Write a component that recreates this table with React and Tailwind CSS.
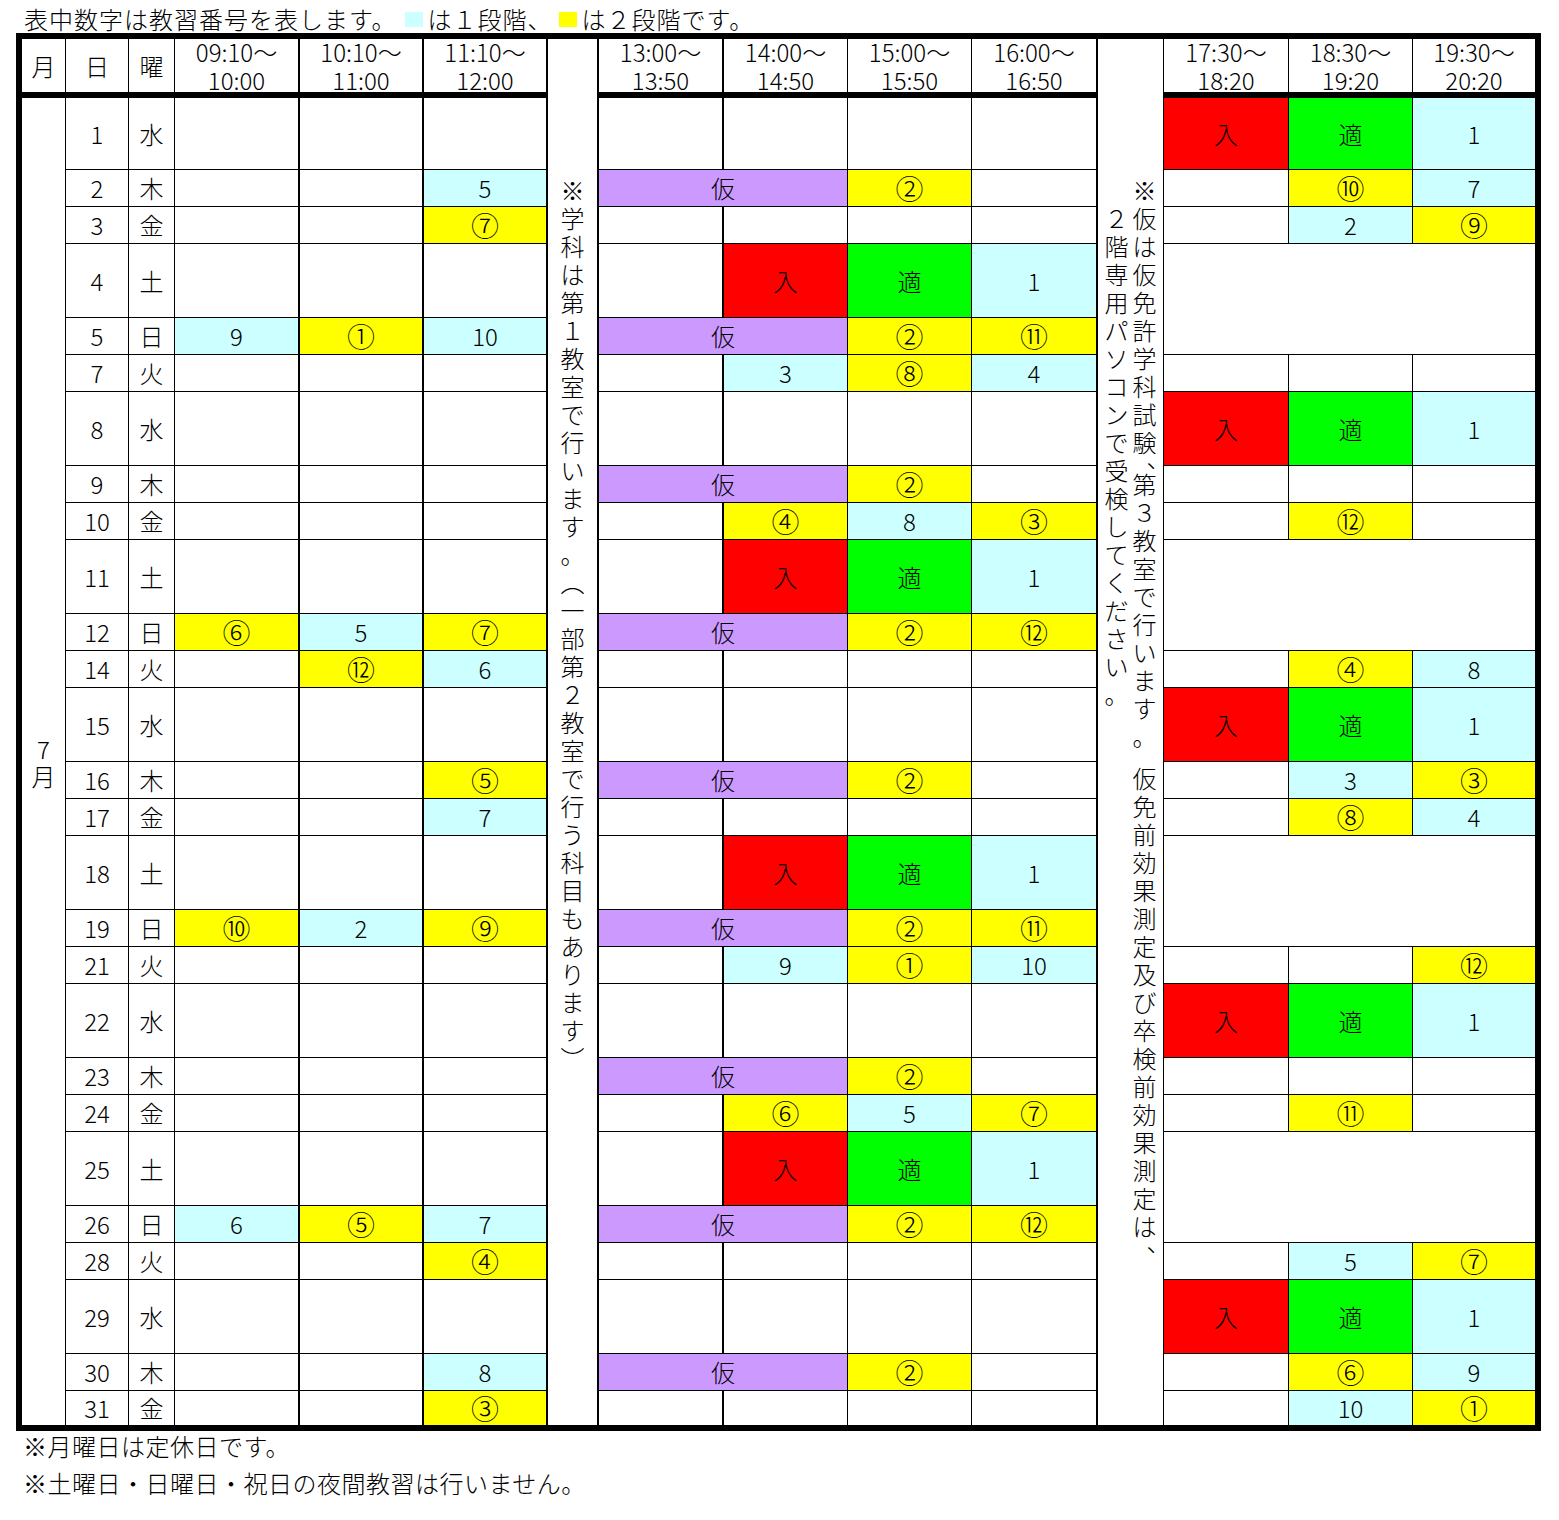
import React from "react";

const circled = "①②③④⑤⑥⑦⑧⑨⑩⑪⑫";

// 月の時間割（1行 = 1日）
const rows = [
  { d: "1", w: "水", tall: true, e: ["入", "適", "1"] },
  { d: "2", w: "木", m: ["", "", "5"], k: ["②", ""], e: ["", "⑩", "7"] },
  { d: "3", w: "金", m: ["", "", "⑦"], e: ["", "2", "⑨"] },
  { d: "4", w: "土", tall: true, a: ["", "入", "適", "1"], off: true },
  { d: "5", w: "日", m: ["9", "①", "10"], k: ["②", "⑪"], off: true },
  { d: "7", w: "火", a: ["", "3", "⑧", "4"] },
  { d: "8", w: "水", tall: true, e: ["入", "適", "1"] },
  { d: "9", w: "木", k: ["②", ""] },
  { d: "10", w: "金", a: ["", "④", "8", "③"], e: ["", "⑫", ""] },
  { d: "11", w: "土", tall: true, a: ["", "入", "適", "1"], off: true },
  { d: "12", w: "日", m: ["⑥", "5", "⑦"], k: ["②", "⑫"], off: true },
  { d: "14", w: "火", m: ["", "⑫", "6"], e: ["", "④", "8"] },
  { d: "15", w: "水", tall: true, e: ["入", "適", "1"] },
  { d: "16", w: "木", m: ["", "", "⑤"], k: ["②", ""], e: ["", "3", "③"] },
  { d: "17", w: "金", m: ["", "", "7"], e: ["", "⑧", "4"] },
  { d: "18", w: "土", tall: true, a: ["", "入", "適", "1"], off: true },
  { d: "19", w: "日", m: ["⑩", "2", "⑨"], k: ["②", "⑪"], off: true },
  { d: "21", w: "火", a: ["", "9", "①", "10"], e: ["", "", "⑫"] },
  { d: "22", w: "水", tall: true, e: ["入", "適", "1"] },
  { d: "23", w: "木", k: ["②", ""] },
  { d: "24", w: "金", a: ["", "⑥", "5", "⑦"], e: ["", "⑪", ""] },
  { d: "25", w: "土", tall: true, a: ["", "入", "適", "1"], off: true },
  { d: "26", w: "日", m: ["6", "⑤", "7"], k: ["②", "⑫"], off: true },
  { d: "28", w: "火", m: ["", "", "④"], e: ["", "5", "⑦"] },
  { d: "29", w: "水", tall: true, e: ["入", "適", "1"] },
  { d: "30", w: "木", m: ["", "", "8"], k: ["②", ""], e: ["", "⑥", "9"] },
  { d: "31", w: "金", m: ["", "", "③"], e: ["", "10", "①"] },
];

const offBlocks = [
  "col-[13/span_3] row-[6/span_2]",
  "col-[13/span_3] row-[12/span_2]",
  "col-[13/span_3] row-[18/span_2]",
  "col-[13/span_3] row-[24/span_2]",
];

const headers = [
  ["09:10～", "10:00"],
  ["10:10～", "11:00"],
  ["11:10～", "12:00"],
  ["13:00～", "13:50"],
  ["14:00～", "14:50"],
  ["15:00～", "15:50"],
  ["16:00～", "16:50"],
  ["17:30～", "18:20"],
  ["18:30～", "19:20"],
  ["19:30～", "20:20"],
];

function tone(v) {
  if (!v) return "bg-white";
  if (v === "入") return "bg-[#ff0000]";
  if (v === "適") return "bg-[#00ff00]";
  if (v === "仮") return "bg-[#cc99ff]";
  if (circled.includes(v)) return "bg-[#ffff00]";
  return "bg-[#ccffff]";
}

function Cell({ v, edge, wide, plain }) {
  const ring = v && circled.includes(v);
  return (
    <div
      className={`flex items-center justify-center leading-none ${ring ? "text-[28px]" : "text-[24px]"} ${
        plain ? "bg-white" : tone(v)
      } ${edge ? "border-l border-black" : ""} ${wide ? "col-span-2" : ""}`}
    >
      {v}
    </div>
  );
}

function Stack({ text, skip }) {
  return (
    <div className="flex w-[24px] flex-col items-center">
      {skip && <span className="h-[28px]" />}
      {Array.from(text).map((c, i) =>
        c === "|" ? (
          <span key={i} className="h-[14px]" />
        ) : c === "､" ? (
          <span key={i} className="relative block h-[14px] w-[24px]">
            <span className="absolute left-[14px] top-[-12px] text-[24px] leading-[28px]">、</span>
          </span>
        ) : (
          <span key={i} className="block h-[28px] text-center text-[24px] leading-[28px]">
            {c}
          </span>
        )
      )}
    </div>
  );
}

export default function App() {
  const cells = [];
  rows.forEach((r) => {
    const m = r.m || ["", "", ""];
    const e = r.e || ["", "", ""];
    cells.push(<Cell key={r.d + "d"} v={r.d} plain />);
    cells.push(<Cell key={r.d + "w"} v={r.w} plain />);
    m.forEach((v, i) => cells.push(<Cell key={r.d + "m" + i} v={v} edge={i > 0} />));
    if (r.k) {
      cells.push(<Cell key={r.d + "k"} v="仮" edge wide />);
      r.k.forEach((v, i) => cells.push(<Cell key={r.d + "kk" + i} v={v} />));
    } else {
      const a = r.a || ["", "", "", ""];
      a.forEach((v, i) => cells.push(<Cell key={r.d + "a" + i} v={v} edge={i < 2} />));
    }
    if (!r.off) e.forEach((v, i) => cells.push(<Cell key={r.d + "e" + i} v={v} />));
  });

  return (
    <div className="min-h-screen bg-white font-light text-black font-['Noto_Sans_CJK_JP','Noto_Sans_CJK_SC',sans-serif]">
      <div className="flex h-[33px] items-center pl-[24px] pt-[5px] text-[24px] tracking-[1px]">
        <span>表中数字は教習番号を表します。</span>
        <span className="ml-[8px] mr-[5px] inline-block h-[15px] w-[18px] bg-[#ccffff]" />
        <span>は１段階、</span>
        <span className="ml-[6px] mr-[5px] inline-block h-[15px] w-[18px] bg-[#ffff00]" />
        <span>は２段階です。</span>
      </div>

      <div className="ml-[16px] grid w-fit gap-px border-[6px] border-black bg-black grid-cols-[43px_62px_45px_123px_123px_123px_50px_124px_124px_123px_124px_66px_124px_123px_122px] grid-rows-[53px_4px_71px_36px_36px_73px_36px_36px_73px_36px_36px_73px_36px_36px_73px_36px_36px_73px_36px_36px_73px_36px_36px_73px_36px_36px_73px_36px_34px]">
        <div className="col-[7] row-[1/-1] flex justify-center border-l border-black bg-white pt-[137px]">
          <Stack text="※学科は第１教室で行います。︵一部第２教室で行う科目もあります︶" />
        </div>
        <div className="col-[12] row-[1/-1] flex justify-center gap-[4px] border-l border-black bg-white pt-[137px]">
          <Stack text="２階専用パソコンで受検してください。" skip />
          <Stack text="※仮は仮免許学科試験､第３教室で行います。|仮免前効果測定及び卒検前効果測定は､" />
        </div>
        <div className="col-[1] row-[3/-1] flex flex-col items-center justify-center bg-white text-[24px] leading-[27px]">
          <span>7</span>
          <span>月</span>
        </div>
        {offBlocks.map((c) => (
          <div key={c} className={`${c} bg-white`} />
        ))}

        <Cell v="月" plain />
        <Cell v="日" plain />
        <Cell v="曜" plain />
        {headers.map(([a, b], i) => (
          <div
            key={a}
            className={`flex flex-col items-center justify-center bg-white text-[24px] leading-[28px] ${
              [1, 2, 3, 4].includes(i) ? "border-l border-black" : ""
            }`}
          >
            <span>{a}</span>
            <span>{b}</span>
          </div>
        ))}
        <div className="col-span-6" />
        <div className="col-span-4" />
        <div className="col-span-3" />

        {cells}
      </div>

      <div className="pl-[23px] text-[24px] tracking-[0.5px]">
        <div className="leading-[30px]">※月曜日は定休日です。</div>
        <div className="leading-[44px]">※土曜日・日曜日・祝日の夜間教習は行いません。</div>
      </div>
    </div>
  );
}
